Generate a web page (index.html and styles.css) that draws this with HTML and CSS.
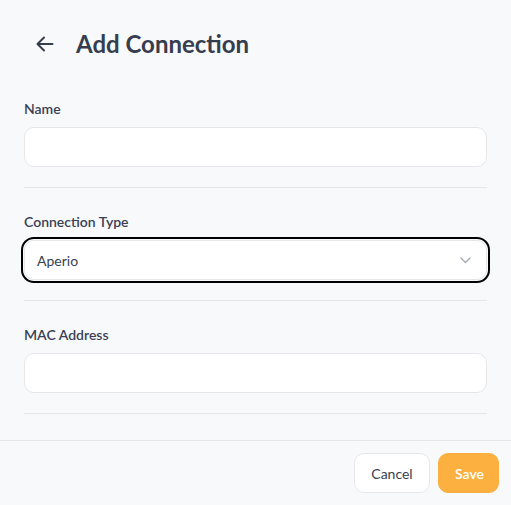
FILE: index.html
```html
<!DOCTYPE html>
<html lang="en">
<head>
<meta charset="utf-8">
<title>Add Connection</title>
<link rel="stylesheet" href="styles.css">
</head>
<body>
<div class="page">
  <main class="main">
    <header class="header">
      <button class="back" aria-label="Back">
        <svg width="18" height="16" viewBox="0 0 18 16" fill="none" stroke="currentColor" stroke-width="2" stroke-linecap="round" stroke-linejoin="round">
          <path d="M8 1.5L1.5 8L8 14.5"/>
          <path d="M2 8H16.5"/>
        </svg>
      </button>
      <h1 class="title">Add Connection</h1>
    </header>
    <section class="field">
      <label class="label">Name</label>
      <div class="input"></div>
    </section>
    <section class="field">
      <label class="label">Connection Type</label>
      <div class="input select focused">
        <span>Aperio</span>
        <svg class="chev" width="11" height="7" viewBox="0 0 11 7" fill="none" stroke="currentColor" stroke-width="1.3" stroke-linecap="round" stroke-linejoin="round">
          <path d="M1 1L5.5 5.5L10 1"/>
        </svg>
      </div>
    </section>
    <section class="field">
      <label class="label">MAC Address</label>
      <div class="input"></div>
    </section>
  </main>
  <footer class="footer">
    <button class="btn cancel">Cancel</button>
    <button class="btn save">Save</button>
  </footer>
</div>
</body>
</html>
```
FILE: styles.css
```css
* { box-sizing: border-box; }
html, body { margin: 0; padding: 0; }
body {
  background: #f8f9fb;
  font-family: Lato, "Noto Sans", sans-serif;
  color: #374151;
}
.page {
  height: 100vh;
  display: flex;
  flex-direction: column;
}
.main {
  flex: 1;
  padding: 0 24px;
}
.header {
  height: 75px;
  display: flex;
  align-items: center;
  gap: 19px;
  padding-left: 9px;
  padding-top: 12px;
}
.back {
  border: 0;
  background: none;
  padding: 0;
  width: 24px;
  height: 24px;
  display: flex;
  align-items: center;
  justify-content: center;
  color: #363d4f;
}
.title {
  margin: 0;
  font-size: 24px;
  line-height: 32px;
  font-weight: 700;
  color: #363d4f;
}
.field {
  padding: 24px 0 20px;
  border-bottom: 1px solid #e5e7eb;
}
.label {
  display: block;
  font-size: 14px;
  line-height: 20px;
  font-weight: 600;
  color: #3a4155;
  margin-bottom: 8px;
}
.input {
  height: 40px;
  background: #fff;
  border: 1px solid #e5e7eb;
  border-radius: 10px;
}
.select {
  display: flex;
  align-items: center;
  justify-content: space-between;
  padding: 0 15px 0 12px;
  font-size: 14px;
  color: #374151;
}
.focused {
  outline: 2px solid #000;
  outline-offset: 1px;
}
.chev { color: #a1a7b3; }
.footer {
  border-top: 1px solid #e5e7eb;
  padding: 12px;
  display: flex;
  justify-content: flex-end;
  gap: 8px;
}
.btn {
  height: 40px;
  border-radius: 10px;
  font-family: Lato, "Noto Sans", sans-serif;
  font-size: 14px;
  padding: 0 16px;
  cursor: pointer;
}
.cancel {
  background: #fff;
  border: 1px solid #e5e7eb;
  color: #374151;
  width: 76px;
}
.save {
  background: #fbb040;
  border: 1px solid #fbb040;
  color: #fff;
  font-weight: 600;
  width: 61px;
}
```
